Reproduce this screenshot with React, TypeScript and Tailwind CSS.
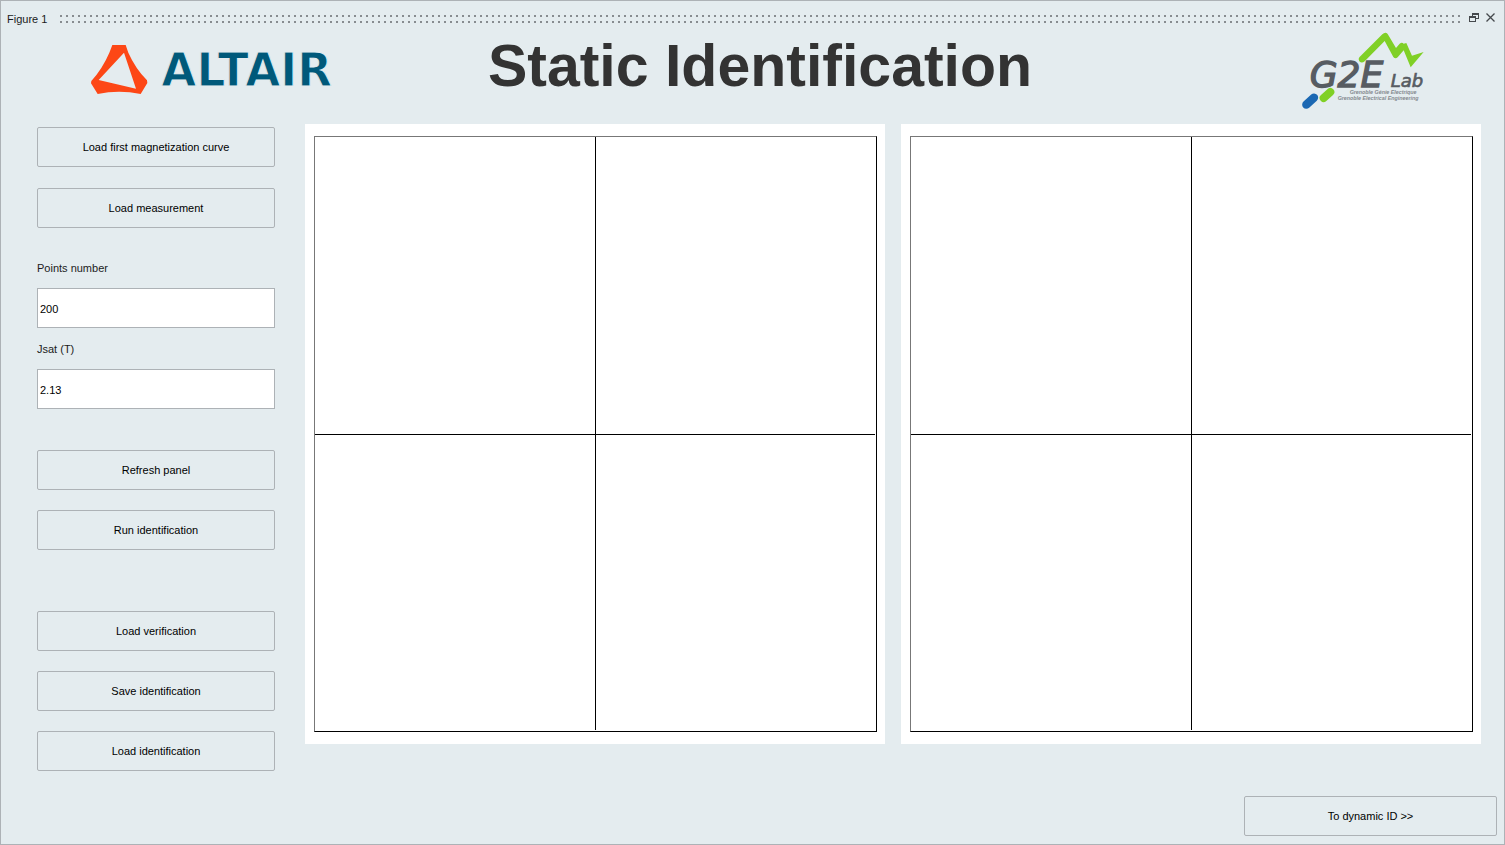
import type { ReactNode } from "react";

function PanelButton({ children, className = "" }: { children: ReactNode; className?: string }) {
  return (
    <button
      type="button"
      className={`h-10 shrink-0 rounded-xs border border-[#adb2b6] text-center text-[11px] text-black hover:bg-[#d9e3e8] ${className}`}
    >
      {children}
    </button>
  );
}

function NumberField({ id, label, value }: { id: string; label: string; value: string }) {
  return (
    <div className="flex flex-col">
      <label htmlFor={id} className="flex h-10 items-center">
        {label}
      </label>
      <input
        id={id}
        type="text"
        defaultValue={value}
        className="h-10 w-full border border-[#adb2b6] bg-white px-0.5 pt-0.5 text-[11px] text-black outline-none"
      />
    </div>
  );
}

function TitleBar() {
  return (
    <header className="flex h-9 items-center pl-1.5 pr-1.5">
      <span className="w-[53px] shrink-0 whitespace-nowrap">Figure 1</span>
      <div className="h-2 flex-1 bg-[conic-gradient(from_270deg_at_2px_2px,#878c90_90deg,transparent_0)] bg-[size:6px_6px]" />
      <button type="button" aria-label="Restore" className="ml-1.5 flex h-5 w-4 items-center justify-center pb-1">
        <svg width="10" height="9" viewBox="0 0 10 9" fill="#45494d" shapeRendering="crispEdges">
          <path d="M3 0h7v6h-3v-1h2v-3h-5v1h-1z" />
          <path fillRule="evenodd" d="M0 3h7v6h-7zM1 5v3h5v-3z" />
        </svg>
      </button>
      <button type="button" aria-label="Close" className="flex h-5 w-4 items-center justify-center pb-1">
        <svg width="9" height="9" viewBox="0 0 9 9" fill="none" stroke="#45494d" strokeWidth="1.3">
          <path d="M0.5 0.5l8 8M8.5 0.5l-8 8" />
        </svg>
      </button>
    </header>
  );
}

function AltairLogo() {
  return (
    <svg width="252" height="60" viewBox="30 15 756 180" role="img" aria-label="Altair">
      <path
        fill="#fd4716"
        fillRule="evenodd"
        d="M97 27H137L145 50Q166 97 201 133L202 141L182 174Q117 160 53 174L33 142L34 135Q68 97 88 50ZM132 50L56 132L168 158Z"
      />
      <text
        x="244"
        y="150"
        fill="#00597a"
        stroke="#e4ecef"
        strokeWidth="3"
        fontFamily="'DejaVu Sans', sans-serif"
        fontWeight="bold"
        fontSize="136"
      >
        ALTAIR
      </text>
    </svg>
  );
}

function G2ELogo() {
  return (
    <svg width="126" height="80" viewBox="30 12 378 240" role="img" aria-label="G2E Lab">
      <path
        d="M208 97L277 28Q286 19 293 27L318 69L329 56Q336 50 341 56L349 54L366 92L401 81L362 127L341 76L323 97Q316 103 310 96L284 48L224 109Q215 116 208 109Q203 103 208 97Z"
        fill="#80d026"
      />
      <path d="M101 219L121 201" stroke="#80d026" strokeWidth="24" strokeLinecap="round" />
      <path d="M49 239L72 218" stroke="#1b68b3" strokeWidth="25" strokeLinecap="round" />
      <g fill="#575c62" stroke="#575c62" fontStyle="italic" fontFamily="'DejaVu Sans', sans-serif">
        <text x="59" y="186" fontSize="108" strokeWidth="4">
          G2E
        </text>
        <text x="302" y="187" fontSize="54" strokeWidth="2">
          Lab
        </text>
      </g>
      <g fill="#858a8f" fontStyle="italic" fontFamily="'Liberation Sans', sans-serif" fontWeight="bold" fontSize="16">
        <text x="179" y="206">
          Grenoble Génie Electrique
        </text>
        <text x="143" y="224">
          Grenoble Electrical Engineering
        </text>
      </g>
    </svg>
  );
}

function EmptyPlot({ label }: { label: string }) {
  return (
    <section aria-label={label} className="flex aspect-[580/620] min-w-0 flex-1 bg-white py-3 pl-[9px] pr-2">
      <div className="grid flex-1 grid-cols-[1fr_1px_1fr] grid-rows-[1fr_1px_1fr] border border-black border-l-[#777777] border-t-[#777777]">
        <div className="col-start-2 row-span-3 row-start-1 mb-px bg-black" />
        <div className="col-span-3 col-start-1 row-start-2 mr-px bg-black" />
      </div>
    </section>
  );
}

export default function App() {
  return (
    <div className="flex min-h-screen flex-col border border-[#adb2b6] bg-[#e4ecef] font-['Liberation_Sans',Arial,sans-serif] text-[11px] text-[#1b1b1b]">
      <TitleBar />

      <div className="flex h-[87px] shrink-0 items-start justify-between pl-[89px] pr-[78px]">
        <div className="w-[260px] pt-1">
          <AltairLogo />
        </div>
        <h1 className="whitespace-nowrap text-[59px] font-bold leading-[58px] text-[#333333]">Static Identification</h1>
        <div className="-mt-2 flex w-64 justify-end">
          <G2ELogo />
        </div>
      </div>

      <main className="flex items-start pl-9 pr-[23px]">
        <form className="mr-[30px] flex w-[238px] shrink-0 flex-col pt-[3px]" onSubmit={(e) => e.preventDefault()}>
          <div className="flex flex-col gap-[21px]">
            <PanelButton>Load first magnetization curve</PanelButton>
            <PanelButton>Load measurement</PanelButton>
          </div>
          <div className="mt-5 flex flex-col gap-px">
            <NumberField id="points" label="Points number" value="200" />
            <NumberField id="jsat" label="Jsat (T)" value="2.13" />
          </div>
          <div className="mt-[41px] flex flex-col gap-5">
            <PanelButton>Refresh panel</PanelButton>
            <PanelButton>Run identification</PanelButton>
          </div>
          <div className="mt-[61px] flex flex-col gap-5">
            <PanelButton>Load verification</PanelButton>
            <PanelButton>Save identification</PanelButton>
            <PanelButton>Load identification</PanelButton>
          </div>
        </form>
        <div className="flex min-w-0 flex-1 gap-4">
          <EmptyPlot label="Measured curves" />
          <EmptyPlot label="Identified curves" />
        </div>
      </main>

      <footer className="mt-auto flex justify-end pb-2 pr-[7px] pt-5">
        <PanelButton className="w-[253px]">To dynamic ID &gt;&gt;</PanelButton>
      </footer>
    </div>
  );
}
